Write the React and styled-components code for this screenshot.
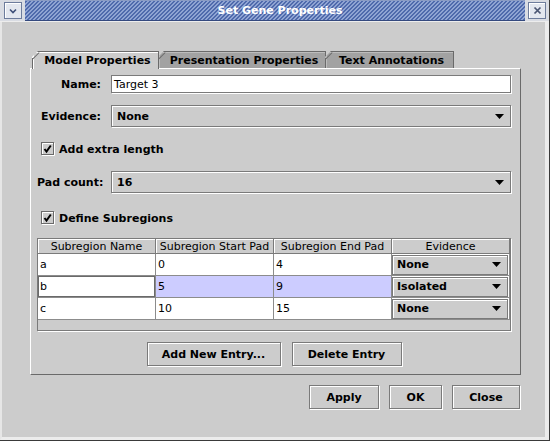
import React from 'react';
import styled, { createGlobalStyle } from 'styled-components';

const GlobalStyle = createGlobalStyle`
  html, body {
    margin: 0;
    padding: 0;
    background: #cccccc;
  }
  body {
    font-family: "DejaVu Sans", "Liberation Sans", sans-serif;
    font-size: 11px;
    color: #000;
  }
  * {
    box-sizing: border-box;
  }
`;

const Window = styled.div`
  width: 550px;
  height: 441px;
  display: flex;
  flex-direction: column;
  background: #cccccc;
  border-right: 1px solid #3a3a3a;
  border-bottom: 1px solid #3a3a3a;
  overflow: hidden;
`;

const TitleBar = styled.div`
  height: 22px;
  display: flex;
  background: #d9dce3;
  border-bottom: 1px solid #ededed;
`;

const TitleSide = styled.div`
  width: ${p => p.$w}px;
  display: flex;
  align-items: center;
  justify-content: center;
  padding-left: ${p => p.$pl || 0}px;
`;

const TitleStripes = styled.div`
  flex: 1;
  display: flex;
  align-items: center;
  justify-content: center;
  padding-left: 10px;
  color: #fff;
  font-weight: bold;
  font-size: 11px;
  border-top: 1px solid #8b9cc4;
  border-bottom: 1px solid #34497e;
  background: repeating-linear-gradient(
    135deg,
    #4f6aac 0px,
    #4f6aac 1.9px,
    #8fa4d3 1.9px,
    #8fa4d3 2.83px
  );
`;

const TitleButton = styled.div`
  width: 18px;
  height: 17px;
  display: flex;
  align-items: center;
  justify-content: center;
  background: #e3e7ef;
  border: 1px solid #6d7c9c;
  box-shadow: inset 1px 1px 0 #fff;
`;

const Body = styled.div`
  flex: 1;
  display: flex;
  flex-direction: column;
  padding: 29px 24px 0 28px;
  border-left: 2px solid #e6e6e6;
  border-right: 4px solid #ececec;
  border-bottom: 3px solid #ececec;
`;

const TabStrip = styled.div`
  display: flex;
  align-items: flex-end;
  height: 17px;
  margin-left: 2px;
  position: relative;
  z-index: 2;
`;

const Tab = styled.div`
  position: relative;
  flex: none;
  width: ${p => p.$w}px;
  height: ${p => (p.$active ? 18 : 17)}px;
  margin-left: ${p => (p.$first ? 0 : -1)}px;
  margin-bottom: ${p => (p.$active ? -1 : 0)}px;
  display: flex;
  align-items: center;
  justify-content: center;
  padding: 0 0 ${p => (p.$active ? 1 : 0)}px 5px;
  font-weight: bold;
  white-space: nowrap;
  background: ${p => (p.$active ? '#cccccc' : '#a2a2a2')};
  border-top: 1px solid #6a6a6a;
  border-right: 1px solid #6a6a6a;
  box-shadow: inset 2px 1px 0 ${p => (p.$active ? '#ffffff' : '#bdbdbd')};
  clip-path: polygon(6px 0, 100% 0, 100% 100%, 0 100%, 0 6px);
  z-index: ${p => (p.$active ? 3 : 1)};

  &::before {
    content: '';
    position: absolute;
    left: 0;
    top: 6px;
    bottom: 0;
    width: 1px;
    background: #6a6a6a;
  }

  &::after {
    content: '';
    position: absolute;
    left: 0;
    top: 0;
    width: 9px;
    height: 1.4px;
    background: #6a6a6a;
    transform-origin: 0 0;
    transform: translate(0.5px, 6.5px) rotate(-45deg);
  }
`;

const Panel = styled.div`
  height: 307px;
  display: flex;
  flex-direction: column;
  padding: 6px 9px 8px 6px;
  border-top: 1px solid #ffffff;
  border-left: 1px solid #ffffff;
  border-right: 1px solid #6a6a6a;
  border-bottom: 1px solid #6a6a6a;
`;

const FieldRow = styled.div`
  display: grid;
  grid-template-columns: 64px 1fr;
  column-gap: 10px;
  align-items: center;
  margin-top: ${p => p.$top || 0}px;
`;

const Label = styled.div`
  text-align: right;
  font-weight: bold;
  white-space: nowrap;
`;

const TextField = styled.div`
  height: 18px;
  display: flex;
  align-items: center;
  padding-left: 2px;
  background: #fff;
  border: 1px solid #7a7a7a;
  box-shadow: 1px 1px 0 #fff;
`;

const Combo = styled.div`
  height: ${p => p.$h || 22}px;
  display: flex;
  align-items: center;
  justify-content: space-between;
  padding: 0 6px 0 5px;
  background: #cccccc;
  font-weight: bold;
  border: 1px solid #7a7a7a;
  box-shadow: inset 1px 1px 0 #fff, 1px 1px 0 #fff;
`;

const CheckRow = styled.div`
  height: 22px;
  display: flex;
  align-items: center;
  gap: 4px;
  padding-left: 4px;
  font-weight: bold;
  margin-top: ${p => p.$top || 0}px;
`;

const ScrollPane = styled.div`
  height: 93px;
  margin-top: 9px;
  display: flex;
  flex-direction: column;
  background: #cccccc;
  border: 1px solid #7a7a7a;
  box-shadow: 1px 1px 0 #fff;
`;

const TableGrid = styled.div`
  display: grid;
  grid-template-columns: repeat(4, 118px);
`;

const HeaderCell = styled.div`
  height: 15px;
  display: flex;
  align-items: center;
  justify-content: center;
  background: #cccccc;
  border-right: 1px solid #7a7a7a;
  border-bottom: 1px solid #7a7a7a;
  box-shadow: inset 1px 1px 0 #fff;
  white-space: nowrap;
  overflow: hidden;
`;

const Cell = styled.div`
  height: 22px;
  display: flex;
  align-items: center;
  padding: ${p => (p.$pad ? '0 0 0 2px' : '0 1px 0 0')};
  background: ${p => (p.$selected ? '#ccccff' : '#ffffff')};
  border-right: 1px solid #8c8c8c;
  border-bottom: 1px solid #8c8c8c;
`;

const Editor = styled.div`
  flex: 1;
  align-self: stretch;
  display: flex;
  align-items: center;
  padding-left: 1px;
  background: #fff;
  border: 1px solid #6a6a6a;
  margin-right: -1px;
`;

const CellCombo = styled(Combo)`
  flex: 1;
  height: 20px;
  padding: 0 6px 0 4px;
  box-shadow: inset 1px 1px 0 #fff;
`;

const ButtonRow = styled.div`
  display: flex;
  justify-content: ${p => p.$justify || 'center'};
  gap: ${p => p.$gap}px;
  margin-top: ${p => p.$top}px;
  margin-right: ${p => p.$right || 0}px;
`;

const Button = styled.button`
  width: ${p => p.$w}px;
  height: 24px;
  padding: 0;
  background: #cccccc;
  color: #000;
  font: bold 11px "DejaVu Sans", "Liberation Sans", sans-serif;
  border: 1px solid #7a7a7a;
  box-shadow: inset 1px 1px 0 #fff, 1px 1px 0 #fff;
`;

const Arrow = () => (
  <svg width="9" height="5" viewBox="0 0 9 5">
    <polygon points="0,0 9,0 4.5,5" fill="#000" />
  </svg>
);

const CheckBox = () => (
  <svg width="14" height="14" viewBox="0 0 14 14">
    <rect x="0.5" y="0.5" width="12" height="12" fill="#cccccc" stroke="#6a6a6a" />
    <path d="M13.5 1 V13.5 H1" fill="none" stroke="#fff" />
    <path d="M1.5 1.5 H12 M1.5 1.5 V12" fill="none" stroke="#fff" />
    <path d="M3.5 7 L5.5 9.5 L9.8 3.5" fill="none" stroke="#000" strokeWidth="2" />
  </svg>
);

const rows = [
  { name: 'a', start: '0', end: '4', evidence: 'None' },
  { name: 'b', start: '5', end: '9', evidence: 'Isolated', editing: true },
  { name: 'c', start: '10', end: '15', evidence: 'None' },
];

const App = () => (
  <>
    <GlobalStyle />
    <Window>
      <TitleBar>
        <TitleSide $w={25} $pl={0}>
          <TitleButton>
            <svg width="10" height="8" viewBox="0 0 10 8">
              <path d="M2 2.5 L5 5.5 L8 2.5" fill="none" stroke="#3e4f78" strokeWidth="1.6" />
            </svg>
          </TitleButton>
        </TitleSide>
        <TitleStripes>Set Gene Properties</TitleStripes>
        <TitleSide $w={24} $pl={0}>
          <TitleButton>
            <svg width="9" height="9" viewBox="0 0 9 9">
              <path d="M1.5 1.5 L7.5 7.5 M7.5 1.5 L1.5 7.5" stroke="#4a5572" strokeWidth="1.7" />
            </svg>
          </TitleButton>
        </TitleSide>
      </TitleBar>

      <Body>
        <TabStrip>
          <Tab $first $active $w={127}>Model Properties</Tab>
          <Tab $w={168}>Presentation Properties</Tab>
          <Tab $w={129}>Text Annotations</Tab>
        </TabStrip>

        <Panel>
          <FieldRow>
            <Label>Name:</Label>
            <TextField>Target 3</TextField>
          </FieldRow>
          <FieldRow $top={12}>
            <Label>Evidence:</Label>
            <Combo>None<Arrow /></Combo>
          </FieldRow>
          <CheckRow $top={11}>
            <CheckBox />
            Add extra length
          </CheckRow>
          <FieldRow $top={11}>
            <Label>Pad count:</Label>
            <Combo>16<Arrow /></Combo>
          </FieldRow>
          <CheckRow $top={14}>
            <CheckBox />
            Define Subregions
          </CheckRow>

          <ScrollPane>
            <TableGrid>
              <HeaderCell>Subregion Name</HeaderCell>
              <HeaderCell>Subregion Start Pad</HeaderCell>
              <HeaderCell>Subregion End Pad</HeaderCell>
              <HeaderCell>Evidence</HeaderCell>
              {rows.map(r => (
                <React.Fragment key={r.name}>
                  <Cell $pad={!r.editing}>
                    {r.editing ? <Editor>{r.name}</Editor> : r.name}
                  </Cell>
                  <Cell $pad $selected={r.editing}>{r.start}</Cell>
                  <Cell $pad $selected={r.editing}>{r.end}</Cell>
                  <Cell>
                    <CellCombo>{r.evidence}<Arrow /></CellCombo>
                  </Cell>
                </React.Fragment>
              ))}
            </TableGrid>
          </ScrollPane>

          <ButtonRow $gap={11} $top={11}>
            <Button $w={134}>Add New Entry...</Button>
            <Button $w={110}>Delete Entry</Button>
          </ButtonRow>
        </Panel>

        <ButtonRow $justify="flex-end" $gap={10} $top={10} $right={1}>
          <Button $w={70}>Apply</Button>
          <Button $w={53}>OK</Button>
          <Button $w={68}>Close</Button>
        </ButtonRow>
      </Body>
    </Window>
  </>
);

export default App;
